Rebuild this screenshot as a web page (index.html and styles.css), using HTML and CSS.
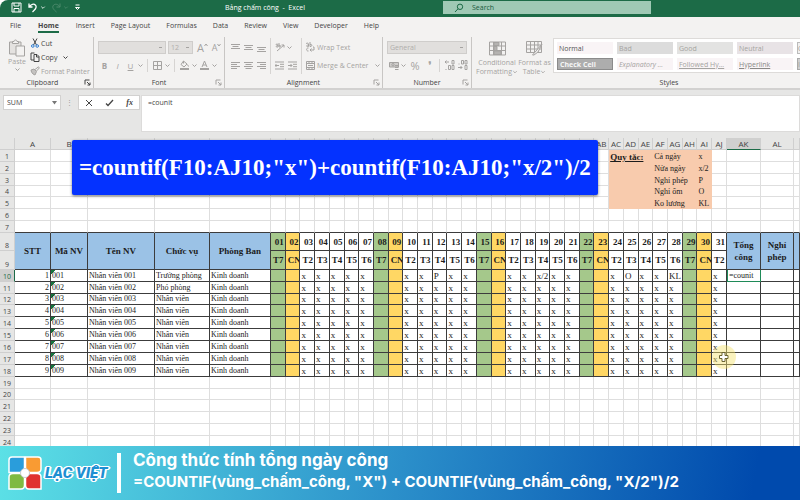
FILE: index.html
```html
<!DOCTYPE html>
<html lang="vi">
<head>
<meta charset="utf-8">
<title>Bảng chấm công - Excel</title>
<link rel="stylesheet" href="styles.css">
</head>
<body>
<svg class="defs" aria-hidden="true">
  <symbol id="chev" viewBox="0 0 7 7"><path d="M1.5 2.5 3.5 4.5 5.5 2.5"/></symbol>
  <symbol id="launch" viewBox="0 0 7 7"><path d="M1 5.500V1H5.500M3 3 6 6M6 3.500V6H3.500"/></symbol>
</svg>
<header class="titlebar">
  <div class="quick">
    <button aria-label="Save"><svg width="11" height="11" viewBox="0 0 11 11"><path d="M1 1H10V10H1ZM3 1V4H8V1M3 10V6.500H8V10"/></svg></button>
    <button aria-label="Undo"><svg width="10" height="11" viewBox="0 0 10 11"><path stroke-width="1.300" d="M1 1.500V5H4.500M1.200 4.800C3 2 6 1.500 7.500 3.200C9.300 5.400 7.500 7.500 4.500 10"/></svg></button>
    <svg width="6" height="7" viewBox="0 0 7 7"><use href="#chev"/></svg>
    <button class="dim" aria-label="Redo"><svg width="10" height="11" viewBox="0 0 10 11"><path d="M9 1.500V5H5.500M8.800 4.800C7 2 4 1.500 2.500 3.200C.7 5.400 2.500 7.500 5.500 10"/></svg></button>
    <svg class="dim" width="6" height="7" viewBox="0 0 7 7"><use href="#chev"/></svg>
    <svg class="more" width="7" height="7" viewBox="0 0 7 7"><path d="M1.500 1H5.500M1.500 3.500 3.500 5.500 5.500 3.500Z"/></svg>
  </div>
  <h1>Bảng chấm công&nbsp; -&nbsp; Excel</h1>
  <label class="search">
    <svg width="10" height="10" viewBox="0 0 10 10"><circle cx="6" cy="3.800" r="2.700"/><path d="M4 5.800 1 9"/></svg>
    <input type="text" placeholder="Search" aria-label="Search">
  </label>
</header>
<nav class="tabs">
  <a href="#">File</a><a href="#" class="on">Home</a><a href="#">Insert</a><a href="#">Page Layout</a><a href="#">Formulas</a><a href="#">Data</a><a href="#">Review</a><a href="#">View</a><a href="#">Developer</a><a href="#">Help</a>
</nav>
<div class="ribbon">
  <section class="group clipboard">
    <div class="body">
      <button class="paste">
        <svg width="18" height="18" viewBox="0 0 18 18"><path fill="#e4e2e0" d="M1.500 3H13V15H1.500Z"/><path fill="#f3f2f1" d="M4.500 4.500V2.500H6C6 .5 9 .5 9 2.500H10.500V4.500Z"/><path fill="#f3f2f1" d="M8 7H16.500V17H8Z"/></svg>
        Paste
        <svg width="7" height="7"><use href="#chev"/></svg>
      </button>
      <div class="stack">
        <button class="dark"><svg width="10" height="10" viewBox="0 0 10 10"><path d="M3 .5 6.500 7M7 .5 3.500 7"/><g stroke="#2b7cd3"><circle cx="2.800" cy="8" r="1.300"/><circle cx="7.200" cy="8" r="1.300"/></g></svg>Cut</button>
        <button class="dark"><svg width="10" height="10" viewBox="0 0 10 10"><path d="M4 8H1V1H4.500M4 2.500H7L9 4.500V9.500H4ZM6.500 2.500V5H9"/></svg>Copy <svg class="after" width="7" height="7"><use href="#chev"/></svg></button>
        <button><svg width="10" height="10" viewBox="0 0 10 10"><path fill="#c4c2c0" d="M1 4 4 3 6.500 5.500 5 9 3 8 1.500 6Z"/><path d="M5 3.500 8.500 .8 9.300 2 6.500 5"/></svg>Format Painter</button>
      </div>
    </div>
    <h2 class="dark">Clipboard<svg width="7" height="7"><use href="#launch"/></svg></h2>
  </section>
  <section class="group font">
    <div class="body rows">
      <div class="row">
        <select class="face" aria-label="Font"><option></option></select>
        <select class="size" aria-label="Font size"><option>12</option></select>
        <button class="tool big" aria-label="Increase font size">A<svg width="4" height="4" viewBox="0 0 4 4"><path d="M.5 3 2 1 3.500 3"/></svg></button>
        <button class="tool mid" aria-label="Decrease font size">A<svg width="4" height="4" viewBox="0 0 4 4"><path d="M.5 1 2 3 3.500 1"/></svg></button>
      </div>
      <div class="row">
        <button class="tool"><b>B</b></button><button class="tool"><i>I</i></button><button class="tool"><u>U</u></button>
        <svg width="7" height="7"><use href="#chev"/></svg><span class="sep"></span>
        <button class="tool" aria-label="Borders"><svg width="9" height="9" viewBox="0 0 9 9"><path d="M.5.500H8.500V8.500H.5ZM4.500.500V8.500M.5 4.500H8.500"/></svg></button>
        <svg width="7" height="7"><use href="#chev"/></svg><span class="sep"></span>
        <button class="tool" aria-label="Fill color"><svg width="11" height="10" viewBox="0 0 11 10"><path d="M4.500 1 8 4 5 7 2 4.500ZM4.500 1V3.500M8.500 4.500 9.500 6.500"/><path stroke-width="2" d="M1 9H10"/></svg></button>
        <svg width="7" height="7"><use href="#chev"/></svg>
        <button class="tool" aria-label="Font color"><svg width="9" height="10" viewBox="0 0 9 10"><path d="M2 7 4.500 1 7 7M3 5H6"/><path stroke-width="2" d="M0 9H9"/></svg></button>
        <svg width="7" height="7"><use href="#chev"/></svg>
      </div>
    </div>
    <h2>Font<svg width="7" height="7"><use href="#launch"/></svg></h2>
  </section>
  <section class="group align">
    <div class="body cols">
      <div class="rows">
        <div class="row">
          <button class="tool" aria-label="Top align"><svg width="9" height="9" viewBox="0 0 9 9"><path d="M0 1.500H9M1.500 3.500H7.500M0 5.500H9"/></svg></button>
          <button class="tool" aria-label="Middle align"><svg width="9" height="9" viewBox="0 0 9 9"><path d="M0 2.500H9M1.500 4.500H7.500M0 6.500H9"/></svg></button>
          <button class="tool" aria-label="Bottom align"><svg width="9" height="9" viewBox="0 0 9 9"><path d="M0 4.500H9M1.500 6.500H7.500M0 8.500H9"/></svg></button>
        </div>
        <div class="row">
          <button class="tool" aria-label="Align left"><svg width="9" height="9" viewBox="0 0 9 9"><path d="M0 1.500H9M0 3.500H6M0 5.500H9M0 7.500H6"/></svg></button>
          <button class="tool" aria-label="Center"><svg width="9" height="9" viewBox="0 0 9 9"><path d="M0 1.500H9M1.500 3.500H7.500M0 5.500H9M1.500 7.500H7.500"/></svg></button>
          <button class="tool" aria-label="Align right"><svg width="9" height="9" viewBox="0 0 9 9"><path d="M0 1.500H9M3 3.500H9M0 5.500H9M3 7.500H9"/></svg></button>
        </div>
      </div>
      <div class="rows">
        <div class="row">
          <button class="tool" aria-label="Orientation"><svg width="10" height="10" viewBox="0 0 10 10"><path d="M1 3C1 1.500 3 1.500 3 3V5M3 3.500C.5 3.500.500 5.500 3 5M4 1V5C6 5.500 6 2.500 4 3.500M2 9 9 3M9 3H6.500M9 3V5.500"/></svg></button>
          <svg width="7" height="7"><use href="#chev"/></svg>
        </div>
        <div class="row">
          <button class="tool" aria-label="Decrease indent"><svg width="9" height="9" viewBox="0 0 9 9"><path d="M0 1H9M5 3.300H9M5 5.700H9M0 8H9M4 4.500H0M1.500 3 0 4.500 1.500 6"/></svg></button>
          <button class="tool" aria-label="Increase indent"><svg width="9" height="9" viewBox="0 0 9 9"><path d="M0 1H9M5 3.300H9M5 5.700H9M0 8H9M0 4.500H4M2.500 3 4 4.500 2.500 6"/></svg></button>
        </div>
      </div>
      <div class="rows">
        <div class="row"><button><svg width="9" height="10" viewBox="0 0 9 10"><path d="M0 2C0 .8 2.500.800 2.500 2V4.500C0 5 0 3 2.500 3M4 0V4.500C6.500 5 6.500 1.500 4 2.500M2.500 6C0 5.500 0 9.500 2.500 9M4 8H8V5H7M5.500 6.500 4 8 5.500 9.500"/></svg>Wrap Text</button></div>
        <div class="row"><button><svg width="9" height="9" viewBox="0 0 9 9"><path d="M.5.500H8.500V8.500H.5ZM.5 2.500H8.500M.5 6.500H8.500M3 .5V2.500M6 .5V2.500M3 6.500V8.500M6 6.500V8.500M2 4.500H7"/></svg>Merge &amp; Center <svg class="after" width="7" height="7"><use href="#chev"/></svg></button></div>
      </div>
    </div>
    <h2>Alignment<svg width="7" height="7"><use href="#launch"/></svg></h2>
  </section>
  <section class="group number">
    <div class="body rows">
      <div class="row"><select class="format" aria-label="Number format"><option>General</option></select></div>
      <div class="row">
        <button class="tool" aria-label="Accounting format"><svg width="10" height="9" viewBox="0 0 10 9"><path fill="#cfcdcb" d="M.5 1.500H9.500V6H.5Z"/><circle cx="4" cy="3.700" r="1.200"/><path d="M6 4.500H9.500M6 6.500H9.500M6 8.500H9.500"/></svg></button>
        <svg width="7" height="7"><use href="#chev"/></svg>
        <button class="tool pct">%</button><button class="tool comma" aria-label="Comma style">❜</button><span class="sep"></span>
        <button class="tool" aria-label="Increase decimal"><svg width="10" height="10" viewBox="0 0 10 10"><path d="M4 2H0M1.500.500 0 2 1.500 3.500M7 .5H9V4H7ZM3.500 5.500H5.500V9.500H3.500ZM7 5.500H9V9.500H7ZM1 9V10"/></svg></button>
        <button class="tool" aria-label="Decrease decimal"><svg width="10" height="10" viewBox="0 0 10 10"><path d="M0 7.500H4M2.500 6 4 7.500 2.500 9M3.500.500H5.500V4H3.500ZM7 .5H9V4H7ZM7 5.500H9V9.500H7ZM1 3.500V4.500"/></svg></button>
      </div>
    </div>
    <h2>Number<svg width="7" height="7"><use href="#launch"/></svg></h2>
  </section>
  <section class="group styles">
    <div class="body">
      <button class="tile"><svg width="17" height="14" viewBox="0 0 17 14"><path d="M.5.500H16.500V13.500H.5ZM.5 4.500H16.500M.5 9H16.500M4.500.500V13.500M12.500.500V13.500"/><path fill="#b5b3b1" d="M5 1H10V4H5ZM5 5H8V9H5ZM5 9.500H12V13H5Z"/></svg>Conditional<span>Formatting <svg width="6" height="6" viewBox="0 0 7 7"><use href="#chev"/></svg></span></button>
      <button class="tile"><svg width="17" height="15" viewBox="0 0 17 15"><path d="M.5.500H15.500V11.500H.5ZM.5 4H15.500M.5 8H15.500M4.500.500V11.500M8.500.500V11.500M12 .5V11.500"/><path fill="#f3f2f1" d="M16 3 10 10 6.500 14 8 14 12 11Z"/></svg>Format as<span>Table <svg width="6" height="6" viewBox="0 0 7 7"><use href="#chev"/></svg></span></button>
      <div class="gallery">
        <button class="normal">Normal</button><button class="bad">Bad</button><button class="good">Good</button><button class="neutral">Neutral</button><button class="calc">C</button>
        <button class="check">Check Cell</button><button class="expl">Explanatory ...</button><button class="link">Followed Hy...</button><button class="hyper">Hyperlink</button><button class="in">I</button>
      </div>
    </div>
    <h2>Styles</h2>
  </section>
</div>
<div class="formula">
  <label class="namebox"><input type="text" value="SUM" aria-label="Name box"><svg width="5" height="4" viewBox="0 0 5 4"><path class="solid" d="M0 0H5L2.500 3.500Z"/></svg></label>
  <span class="grip">⋮</span>
  <div class="entry">
    <button aria-label="Cancel"><svg width="8" height="8" viewBox="0 0 8 8"><path d="M1 1 7 7M7 1 1 7"/></svg></button>
    <button aria-label="Enter"><svg width="9" height="8" viewBox="0 0 9 8"><path stroke-width="1.300" d="M1 4.500 3 6.500 8 1"/></svg></button>
    <button class="fx"><i>fx</i></button>
  </div>
  <textarea aria-label="Formula">=counit</textarea>
</div>
<main class="sheet">
  <table>
    <colgroup id="cols"></colgroup>
    <thead id="head"></thead>
    <tbody id="grid"></tbody>
  </table>
  <div class="banner">=countif(F10:AJ10;"x")+countif(F10:AJ10;"x/2")/2</div>
  <svg class="pointer" width="26" height="26" viewBox="0 0 26 26"><circle cx="13" cy="13" r="12"/><path d="M11 8.500H14V11.500H17V14.500H14V17.500H11V14.500H8.500V11.500H11Z"/></svg>
</main>
<footer>
  <svg class="mark" width="34" height="34" viewBox="0 0 34 34">
    <g stroke="#fff" stroke-width="1.500">
      <path fill="#2a9ddb" d="M4 1H16.500V16.500H1V4Q1 1 4 1Z"/><path fill="#f99b33" d="M17.500 1H30Q33 1 33 4V13Q33 16.500 29 16.500H17.500Z"/>
      <path fill="#7fba42" d="M1 21Q1 17.500 5 17.500H16.500V29Q16.500 33 13 33H1Z"/><path fill="#e0322f" d="M17.500 17.500H29Q33 17.500 33 21V33H21Q17.500 33 17.500 29Z"/>
    </g>
    <circle cx="17" cy="17" r="4.500" fill="#fff" stroke="#c9ced2"/>
  </svg>
  <span class="brand">LẠC VIỆT</span>
  <div class="caption"><p>Công thức tính tổng ngày công</p><p class="sub">=COUNTIF(vùng_chấm_công, "X") + COUNTIF(vùng_chấm_công, "X/2")/2</p></div>
</footer>
<script src="sheet.js"></script>
</body>
</html>
```
FILE: styles.css
```css
* { box-sizing: border-box; }
body {
  margin: 0;
  height: 100vh;
  display: flex;
  flex-direction: column;
  overflow: hidden;
  background: #fff;
  color: #444;
  font: 7px/9px "Open Sans", "Noto Sans", sans-serif;
}
.defs { position: absolute; width: 0; height: 0; }
svg { flex: none; fill: none; stroke: currentColor; }
button, input, select, textarea {
  margin: 0;
  padding: 0;
  border: 0;
  border-radius: 0;
  background: none;
  color: inherit;
  font: inherit;
  outline: 0;
}
button { display: flex; align-items: center; white-space: nowrap; }
h1, h2, p { margin: 0; font: inherit; }

.titlebar {
  flex: none;
  display: flex;
  align-items: flex-start;
  height: 17px;
  background: #1c6b47;
  border-top-left-radius: 8px;
  color: #fff;
}
.quick { display: flex; align-items: center; width: 225px; height: 15px; padding-left: 11px; }
.quick button { margin-right: 2px; }
.quick button:first-child { margin-right: 6px; }
.quick > svg { margin-right: 5px; }
.quick .dim { color: #4c8a6c; }
.quick .more { margin-left: 0; }
.titlebar h1 { width: 218px; line-height: 15px; white-space: nowrap; }
.search {
  display: flex;
  align-items: center;
  width: 26%;
  height: 13px;
  margin-top: 1px;
  padding-left: 11px;
  gap: 8px;
  background: #9fc9b5;
  color: #1c6b47;
}
.search input { flex: 1; min-width: 0; }
.search input::placeholder { color: #1c5c3e; opacity: 1; }

.tabs { flex: none; display: flex; gap: 16px; height: 20px; padding: 4px 10px 0; background: #f3f2f1; }
.tabs a { height: 12px; color: #444; text-decoration: none; white-space: nowrap; }
.tabs .on { margin: 0 1px; font-weight: bold; border-bottom: 2px solid #1c6b47; }

.ribbon {
  flex: none;
  display: flex;
  height: 53px;
  background: #f3f2f1;
  border-bottom: 2px solid #d2d1d0;
  color: #a5a3a1;
}
.group { flex: none; display: flex; flex-direction: column; border-right: 1px solid #c8c6c4; }
.group h2 { position: relative; color: #444; text-align: center; line-height: 10px; }
.group h2 svg { position: absolute; right: 2px; top: 1px; color: #a5a3a1; }
.group h2.dark svg { color: #444; }
.group .body { flex: none; display: flex; height: 41px; }
.dark { color: #444; }
.clipboard { width: 94px; }
.clipboard .body { padding: 0 0 0 8px; gap: 4px; }
.clipboard h2 { padding-right: 8px; }
.paste { flex-direction: column; width: 18px; padding-top: 2px; }
.stack { display: flex; flex-direction: column; justify-content: space-between; height: 40px; }
.stack button { height: 12px; gap: 1px; }
.after { margin-left: 4px; }
.rows { display: flex; flex-direction: column; }
.group .rows .row { display: flex; align-items: center; height: 18px; white-space: nowrap; }
.group .body.rows, .cols { padding-top: 1px; }
.sep { width: 1px; height: 13px; margin: 0 3px; background: #d6d4d2; }
.tool { width: 13px; height: 13px; justify-content: center; font-size: 8px; }
.big { font-size: 11px; margin-left: 3px; }
.mid { font-size: 9px; margin-left: 1px; }
.tool.big svg, .tool.mid svg { align-self: flex-start; margin-top: 2px; }
.font { width: 131px; }
.font .body { padding-left: 4px; }
select {
  height: 13px;
  padding: 0 2px;
  border: 1px solid #cfcdcb;
  appearance: none;
  color: #b0aeac;
  background: #e1dfdd linear-gradient(#a5a3a1, #a5a3a1) no-repeat right 3px center / 3px 1px;
}
.face { width: 68px; margin-right: 2px; }
.size { width: 25px; }
.align { width: 158px; }
.cols > .rows { border-right: 1px solid #d6d4d2; height: 36px; }
.cols > .rows:nth-child(1) { width: 46px; padding-left: 4px; }
.cols > .rows:nth-child(2) { width: 31px; padding-left: 2px; }
.cols > .rows:nth-child(3) { border: 0; padding-left: 4px; }
.cols button { gap: 2px; }
.number { width: 89px; }
.number .body { padding-left: 4px; }
.number .format { width: 80px; }
.tool.pct { width: 16px; font-size: 11px; }
.tool.comma { font-size: 12px; }
.styles { flex: 1; min-width: 0; border: 0; }
.styles .body { padding: 1px 0 0 6px; }
.styles h2 { padding-left: 66px; }
.tile { flex-direction: column; width: 37px; padding-top: 2px; }
.tile:first-child { width: 38px; }
.tile > svg { height: 17px; margin-bottom: 1px; }
.tile span { display: flex; align-items: center; }
.gallery {
  display: grid;
  grid-template-columns: repeat(4, 56px) 1fr;
  grid-template-rows: 12px 12px;
  gap: 4px;
  flex: 1;
  min-width: 0;
  height: 35px;
  margin-left: 0;
  padding: 3px 0 0 3px;
  overflow: hidden;
  background: #fff;
  border: 1px solid #dddbd9;
  border-right: 0;
}
.gallery button { padding-left: 2px; background: #f9f4f6; }
.gallery .normal { color: #555; }
.gallery .bad { background: #dcdcdc; }
.gallery .good { background: #e3e3e2; }
.gallery .neutral { background: #e8e3e6; }
.gallery .calc { padding: 0; border: 1px solid #bbb; border-right: 0; background: #f0f0f0; }
.gallery .check { border: 1px solid #8b8b8b; background: #adadad; color: #f6f6f6; font-weight: bold; }
.gallery .expl { font-style: italic; }
.gallery .link, .gallery .hyper { text-decoration: underline; }
.gallery .hyper { color: #8a8886; }
.gallery .in { padding: 0; border: 1px solid #aaa; border-right: 0; background: #cfcfcf; }

.formula { flex: none; display: flex; align-items: flex-start; height: 48px; padding: 5px 0 0 3px; background: #e6e6e5; }
.namebox, .entry { display: flex; align-items: center; height: 15px; background: #fff; border: 1px solid #d2d1d0; }
.namebox { width: 58px; padding: 0 3px; }
.namebox input { flex: 1; min-width: 0; }
.solid { fill: #777; stroke: none; }
.grip { width: 17px; text-align: center; line-height: 15px; color: #999; }
.entry { width: 62px; justify-content: space-around; }
.fx { font: bold 8px/9px "Liberation Serif", serif; }
.formula textarea {
  flex: 1;
  min-width: 0;
  height: 37px;
  margin-left: 1px;
  padding: 2px 6px;
  background: #fff;
  border: 1px solid #dcdbda;
  resize: none;
}

.sheet { flex: 1; min-height: 0; position: relative; overflow: hidden; }
table { width: 100%; table-layout: fixed; border-collapse: separate; border-spacing: 0; color: #1c1c1c; }
th, td { padding: 0; overflow: hidden; white-space: nowrap; border: 0 solid #dedede; border-width: 0 1px 1px 0; }
.c-row { width: 15px; }
.c-a { width: 36px; }
.c-b { width: 37px; }
.c-c { width: 67px; }
.c-d { width: 55px; }
.c-e { width: 61px; }
.c-ak { width: 34px; }
.c-al { width: 33px; }
.c-am { width: 6px; }
thead th { height: 12px; background: #e6e6e5; border-color: #cfcfcf; font-size: 8px; line-height: 10px; font-weight: normal; color: #444; }
thead th.active { background: #d0d0cf; border-bottom-color: #1c6b47; }
tbody th[scope=row] {
  height: 12px;
  vertical-align: bottom;
  background: #e6e6e5;
  border-color: #cfcfcf;
  font-weight: normal;
  color: #444;
}
tbody tr:nth-child(8n+4) th[scope=row] { height: 11px; }
tbody tr.dates th[scope=row] { height: 18px; }
tbody tr.weekdays th[scope=row] { height: 19px; }
tbody th.active[scope=row] { background: #d0d0cf; border-right-color: #1c6b47; color: #1c6b47; }
td { font: 8px/10px "Liberation Serif", serif; padding-left: 1px; vertical-align: bottom; }
td.rule { background: #f8cbad; border: 0; }
td.rule.name { font: bold 9px/10px "Liberation Serif", serif; text-decoration: underline; }
.ink, .field, .day { border-color: #3c3c3c; }
.above td { border-bottom-color: #3c3c3c; }
.field, .day { font: bold 9px/12px "Liberation Serif", serif; vertical-align: middle; }
.field { background: #9bc2e6; white-space: normal; text-align: center; }
.dates .day { text-align: right; padding-right: 1px; }
.weekdays .day { text-align: left; padding-left: 2px; }
.sat { background: #a5c88b; }
.sun { background: #ffd764; }
.num { text-align: right; padding-right: 1px; }
.code { background: linear-gradient(135deg, #17753f 3px, transparent 3px); }
.mark-cell { font-size: 9px; }
.edit { border: 1px solid #1f8a58; border-top-width: 0; padding: 0 0 0 1px; }

.banner {
  position: absolute;
  left: 72px;
  top: 2px;
  padding: 0 7px;
  background: #0432ff;
  border-radius: 2px;
  box-shadow: 0 1px 3px #0008;
  color: #fff;
  font: bold 23px/55px "Liberation Serif", serif;
  white-space: nowrap;
}
.pointer { position: absolute; left: 711px; top: 206px; stroke: none; }
.pointer circle { fill: #f3e36c; fill-opacity: .45; }
.pointer path { fill: #fff; stroke: #6b6432; stroke-width: 1; }

footer {
  flex: none;
  display: flex;
  align-items: center;
  height: 54px;
  padding-left: 8px;
  background: linear-gradient(100deg, #5ce1e6, #2b8fca 50%, #004aad 94%);
  color: #fff;
}
.brand {
  width: 75px;
  padding-left: 3px;
  color: #1d8fd2;
  font: italic 900 15px/20px Roboto, sans-serif;
  white-space: nowrap;
  text-shadow: 1px 0 #fff, -1px 0 #fff, 0 1px #fff, 0 -1px #fff, 1px 1px #fff, -1px -1px #fff, 1px -1px #fff, -1px 1px #fff, 2px 0 #fff, -2px 0 #fff;
}
.caption { padding-left: 12px; border-left: 4px solid #fff; height: 40px; font: bold 17px/20px Inter, sans-serif; white-space: nowrap; }
.caption p { line-height: 14px; }
.caption .sub { margin-top: 8px; font-size: 15px; }
```
FILE: sheet.js
```js
const DAYS = 31;
const WEEK = ["T7", "CN", "T2", "T3", "T4", "T5", "T6"];
const letters = n => (n > 26 ? String.fromCharCode(64 + Math.floor((n - 1) / 26)) : "") + String.fromCharCode(65 + (n - 1) % 26);
const two = n => String(n).padStart(2, "0");
const cell = (cls, text = "", attrs = "") => `<td class="${cls}" ${attrs}>${text}</td>`;
const field = text => `<th class="field" rowspan="2">${text}</th>`;
const tint = d => ["sat", "sun"][(d - 1) % 7] || "";

document.getElementById("cols").innerHTML =
  ["c-row", "c-a", "c-b", "c-c", "c-d", "c-e", ...Array(DAYS).fill("c-day"), "c-ak", "c-al", "c-am"]
    .map(c => `<col class="${c}">`).join("");

let head = "<tr><th></th>";
for (let n = 1; n <= 39; n++) head += `<th${n === 37 ? ' class="active"' : ""}>${n === 39 ? "" : letters(n)}</th>`;
document.getElementById("head").innerHTML = head + "</tr>";

const rules = [["Cả ngày", "x"], ["Nửa ngày", "x/2"], ["Nghỉ phép", "P"], ["Nghỉ ốm", "O"], ["Ko lương", "KL"]];
const special = { 12: "P", 19: "x/2", 25: "O", 28: "KL" };
let html = "";
for (let r = 1; r <= 24; r++) {
  const cls = r === 7 ? "above" : r === 8 ? "dates" : r === 9 ? "weekdays" : "";
  html += `<tr class="${cls}"><th scope="row"${r === 10 ? ' class="active"' : ""}>${r}</th>`;
  if (r <= 5) {
    html += cell("").repeat(28);
    html += cell("rule name", r === 1 ? "Quy tắc:" : "", 'colspan="3"');
    html += cell("rule", rules[r - 1][0], 'colspan="3"') + cell("rule", rules[r - 1][1]);
    html += cell("").repeat(4);
  } else if (r === 8) {
    html += ["STT", "Mã NV", "Tên NV", "Chức vụ", "Phòng Ban"].map(field).join("");
    for (let d = 1; d <= DAYS; d++) html += `<th class="day ${tint(d)}">${two(d)}</th>`;
    html += field("Tổng công") + field("Nghỉ phép") + field("");
  } else if (r === 9) {
    for (let d = 1; d <= DAYS; d++) html += `<th class="day ${tint(d)}">${WEEK[(d - 1) % 7]}</th>`;
  } else if (r >= 10 && r <= 18) {
    const n = r - 9;
    html += cell("ink num", n) + cell("ink code", "00" + n) + cell("ink", "Nhân viên 00" + n);
    html += cell("ink", n === 1 ? "Trưởng phòng" : n === 2 ? "Phó phòng" : "Nhân viên") + cell("ink", "Kinh doanh");
    for (let d = 1; d <= DAYS; d++) {
      const t = tint(d);
      html += cell("ink mark-cell " + t, t ? "" : (n === 1 && special[d]) || "x");
    }
    html += cell(n === 1 ? "edit" : "ink", n === 1 ? "=counit" : "") + cell("ink") + cell("ink");
  } else {
    html += cell("").repeat(39);
  }
  html += "</tr>";
}
document.getElementById("grid").innerHTML = html;
```
